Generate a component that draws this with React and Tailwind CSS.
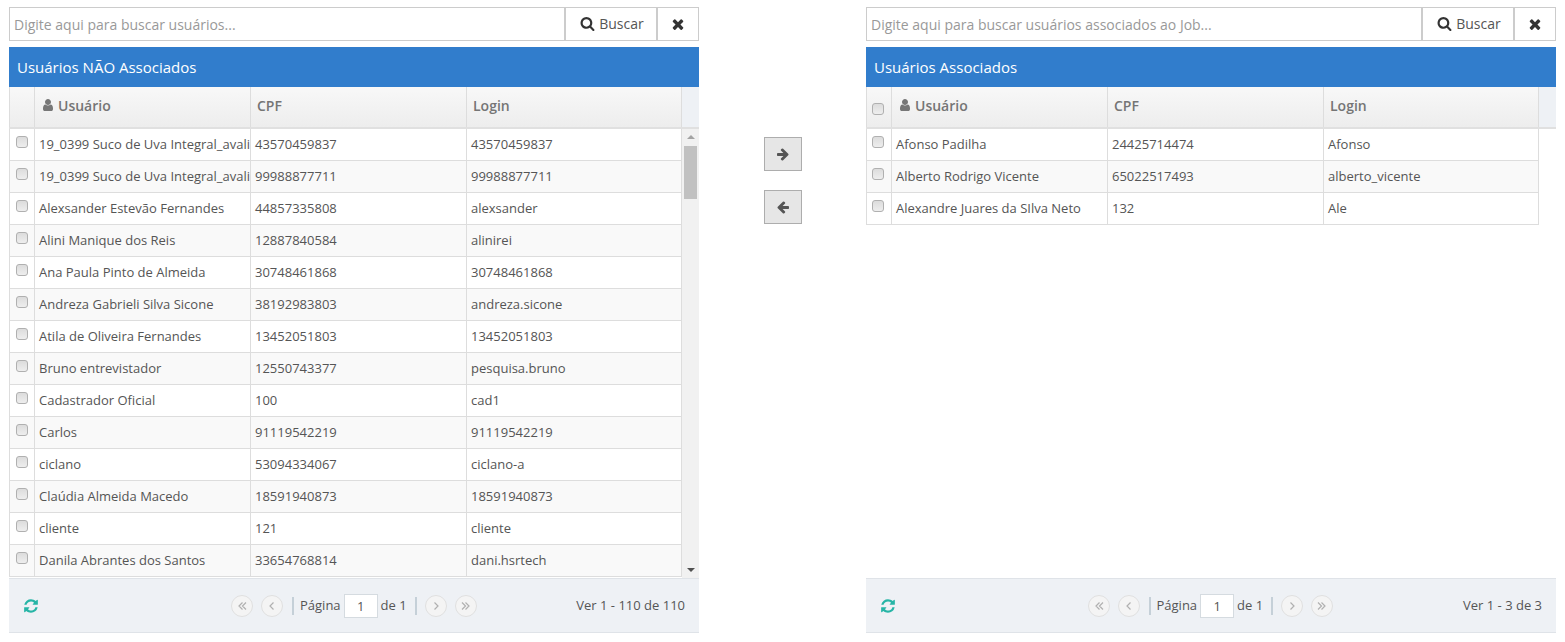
const left = [
  ['19_0399 Suco de Uva Integral_avali', '43570459837', '43570459837'],
  ['19_0399 Suco de Uva Integral_avali', '99988877711', '99988877711'],
  ['Alexsander Estevão Fernandes', '44857335808', 'alexsander'],
  ['Alini Manique dos Reis', '12887840584', 'alinirei'],
  ['Ana Paula Pinto de Almeida', '30748461868', '30748461868'],
  ['Andreza Gabrieli Silva Sicone', '38192983803', 'andreza.sicone'],
  ['Atila de Oliveira Fernandes', '13452051803', '13452051803'],
  ['Bruno entrevistador', '12550743377', 'pesquisa.bruno'],
  ['Cadastrador Oficial', '100', 'cad1'],
  ['Carlos', '91119542219', '91119542219'],
  ['ciclano', '53094334067', 'ciclano-a'],
  ['Claúdia Almeida Macedo', '18591940873', '18591940873'],
  ['cliente', '121', 'cliente'],
  ['Danila Abrantes dos Santos', '33654768814', 'dani.hsrtech'],
];

const right = [
  ['Afonso Padilha', '24425714474', 'Afonso'],
  ['Alberto Rodrigo Vicente', '65022517493', 'alberto_vicente'],
  ['Alexandre Juares da SIlva Neto', '132', 'Ale'],
];

const paths = {
  search: 'M1216 832q0-185-131.500-316.500t-316.500-131.500-316.500 131.500-131.500 316.500 131.500 316.500 316.500 131.500 316.500-131.500 131.500-316.500zm512 832q0 52-38 90t-90 38q-54 0-90-38l-343-342q-179 124-399 124-143 0-273.500-55.500t-225-150-150-225-55.500-273.500 55.500-273.500 150-225 225-150 273.500-55.500 273.500 55.500 225 150 150 225 55.500 273.500q0 220-124 399l343 343q37 37 37 90z',
  times: 'M1490 1322q0 40-28 68l-136 136q-28 28-68 28t-68-28l-294-294-294 294q-28 28-68 28t-68-28l-136-136q-28-28-28-68t28-68l294-294-294-294q-28-28-28-68t28-68l136-136q28-28 68-28t68 28l294 294 294-294q28-28 68-28t68 28l136 136q28 28 28 68t-28 68l-294 294 294 294q28 28 28 68z',
  right: 'M1600 960q0 54-37 91l-651 651q-39 37-91 37-51 0-90-37l-75-75q-38-38-38-91t38-91l293-293h-704q-52 0-84.500-37.500t-32.500-90.500v-128q0-53 32.500-90.500t84.500-37.500h704l-293-294q-38-36-38-90t38-90l75-75q38-38 90-38 53 0 91 38l651 651q37 35 37 90z',
  left: 'M1664 896v128q0 53-32.500 90.500t-84.500 37.500h-704l293 294q38 36 38 90t-38 90l-75 75q-38 38-90 38-53 0-91-38l-651-651q-37-37-37-91 0-53 37-91l651-650q38-38 91-38 52 0 90 38l75 74q38 38 38 91t-38 91l-293 293h704q52 0 84.500 37.500t32.500 90.500z',
  user: 'M1536 1399q0 109-62.500 187t-150.500 78h-854q-88 0-150.500-78t-62.500-187q0-85 8.500-160.500t31.500-152 58.500-131 94-89 134.500-34.500q131 128 313 128t313-128q76 0 134.500 34.500t94 89 58.500 131 31.500 152 8.500 160.500zm-256-887q0 159-112.500 271.500t-271.500 112.500-271.500-112.500-112.500-271.500 112.500-271.500 271.500-112.500 271.500 112.500 112.500 271.500z',
  refresh: 'M1639 1056q0 5-1 7-64 268-268 434.500t-478 166.500q-146 0-282.500-55t-243.500-157l-129 129q-19 19-45 19t-45-19-19-45v-448q0-26 19-45t45-19h448q26 0 45 19t19 45-19 45l-137 137q71 66 161 102t187 36q134 0 250-65t186-179q11-17 53-117 8-23 30-23h192q13 0 22.500 9.500t9.500 22.500zm25-800v448q0 26-19 45t-45 19h-448q-26 0-45-19t-19-45 19-45l138-138q-148-137-349-137-134 0-250 65t-186 179q-11 17-53 117-8 23-30 23h-199q-13 0-22.500-9.500t-9.500-22.500v-7q65-268 270-434.500t480-166.500q146 0 284 55.500t245 156.500l130-129q19-19 45-19t45 19 19 45z',
};

function Fa({ name, size, className }) {
  return (
    <svg viewBox="0 0 1792 1792" width={size} height={size} fill="currentColor" className={className}>
      <path d={paths[name]} />
    </svg>
  );
}

function Check() {
  return (
    <input
      type="checkbox"
      className="appearance-none block w-[12px] h-[12px] rounded-[3px] border border-[#b0b0b0] bg-gradient-to-b from-[#dcdcdc] to-[#eeeeee]"
    />
  );
}

function SearchBar({ placeholder }) {
  return (
    <div className="flex h-[34px] text-[14px]">
      <input
        placeholder={placeholder}
        className="flex-1 min-w-0 border border-[#ccc] border-r-0 px-[4px] text-[14px] text-[#555] placeholder:text-[#999] outline-none"
      />
      <button className="w-[92px] pl-[2px] pb-[2px] border border-[#ccc] border-r-0 border-l-2 flex items-center justify-center gap-[4px] text-[#555]">
        <Fa name="search" size={15} className="text-[#333] mt-[1px]" />
        Buscar
      </button>
      <button className="w-[43px] border border-[#ccc] border-l-2 flex items-center justify-center text-[#333]">
        <Fa name="times" size={16} />
      </button>
    </div>
  );
}

function Circle({ children }) {
  return (
    <span className="w-[22px] h-[22px] rounded-full border border-[#e0e0e0] bg-[#f4f4f4] flex items-center justify-center text-[#b0b0b0]">
      <svg viewBox="0 0 12 12" width="12" height="12" fill="none" stroke="currentColor" strokeWidth="1.2">
        <path d={children} />
      </svg>
    </span>
  );
}

function Pager({ leadClass, total }) {
  return (
    <div className="h-[55px] shrink-0 flex items-center bg-[#eef1f5] border-t border-[#dfe3e8] border-b text-[13px] text-[#555]">
      <div className={leadClass}>
        <Fa name="refresh" size={16} className="text-[#26b5a6]" />
      </div>
      <div className="flex items-center">
        <Circle>M6.5 2.500 3 6l3.500 3.500M10 2.500 6.500 6l3.500 3.500</Circle>
        <span className="ml-[8px]"><Circle>M7.500 2.500 4 6l3.500 3.500</Circle></span>
        <span className="ml-[9px] mr-[6px] w-[2px] h-[18px] bg-[#c5d0d8]" />
        <span>Página</span>
        <input
          readOnly
          value="1"
          className="mx-[3px] w-[34px] h-[24px] bg-white border border-[#d5dbe0] text-center text-[13px] text-[#555] outline-none"
        />
        <span>de 1</span>
        <span className="ml-[8px] mr-[8px] w-[2px] h-[18px] bg-[#c5d0d8]" />
        <Circle>M4.500 2.500 8 6l-3.500 3.500</Circle>
        <span className="ml-[8px]"><Circle>M2 2.500 5.500 6 2 9.500M5.500 2.500 9 6l-3.500 3.500</Circle></span>
      </div>
      <span className="ml-auto pr-[14px]">{total}</span>
    </div>
  );
}

function Table({ rows, headCheck, scroll, checkPad }) {
  return (
    <div className="flex-1 min-h-0 flex flex-col overflow-hidden">
      <div className="flex h-[42px] shrink-0">
        <div className="grid grid-cols-[26px_216px_216px_215px] border-b-2 border-[#e0e0e0] bg-gradient-to-b from-[#f8f8f8] to-[#ededed] text-[14px] font-semibold text-[#757575]">
          <div className={`border-l border-r border-[#ddd] pt-[16px] ${checkPad}`}>{headCheck && <Check />}</div>
          <div className="border-r border-[#ddd] pl-[6px] flex items-center gap-[3px] pb-[4px]">
            <Fa name="user" size={14} className="text-[#777]" />
            Usuário
          </div>
          <div className="border-r border-[#ddd] pl-[6px] flex items-center pb-[4px]">CPF</div>
          <div className="border-r border-[#ddd] pl-[6px] flex items-center pb-[4px]">Login</div>
        </div>
        <div className="flex-1 bg-[#eef1f5] border-b-2 border-[#e0e0e0]" />
      </div>
      <div className="flex flex-1 min-h-0">
        <div className="overflow-hidden">
          {rows.map((r, i) => (
            <div
              key={i}
              className={`grid grid-cols-[26px_216px_216px_215px] h-[32px] border-b border-[#ddd] text-[13px] text-[#555] ${i % 2 ? 'bg-[#f9f9f9]' : 'bg-white'}`}
            >
              <div className={`border-l border-r border-[#ddd] pt-[7px] ${checkPad}`}><Check /></div>
              <div className="border-r border-[#ddd] pl-[4px] flex items-center overflow-hidden whitespace-nowrap">{r[0]}</div>
              <div className="border-r border-[#ddd] pl-[4px] flex items-center">{r[1]}</div>
              <div className="border-r border-[#ddd] pl-[4px] flex items-center">{r[2]}</div>
            </div>
          ))}
        </div>
        {scroll && (
          <div className="flex-1 bg-[#f1f1f1] flex flex-col items-center">
            <span className="mt-[6px] w-0 h-0 border-x-[4px] border-x-transparent border-b-[4px] border-b-[#a3a3a3]" />
            <span className="mt-[7px] w-[13px] h-[53px] bg-[#c1c1c1]" />
            <span className="mt-auto mb-[6px] w-0 h-0 border-x-[4px] border-x-transparent border-t-[4px] border-t-[#505050]" />
          </div>
        )}
      </div>
    </div>
  );
}

function Panel({ placeholder, title, rows, headCheck, scroll, checkPad, leadClass, total }) {
  return (
    <div className="w-[690px] shrink-0 flex flex-col">
      <SearchBar placeholder={placeholder} />
      <div className="mt-[6px] h-[40px] shrink-0 bg-[#317dcc] text-white text-[15px] flex items-center pl-[8px]">{title}</div>
      <Table rows={rows} headCheck={headCheck} scroll={scroll} checkPad={checkPad} />
      <Pager leadClass={leadClass} total={total} />
    </div>
  );
}

export default function App() {
  return (
    <div className="h-[642px] overflow-hidden bg-white flex px-[9px] pt-[7px] pb-[9px] font-['Open_Sans',sans-serif]">
      <Panel
        placeholder="Digite aqui para buscar usuários..."
        title="Usuários NÃO Associados"
        rows={left}
        scroll
        checkPad="pl-[6px]"
        leadClass="w-[222px] pl-[14px]"
        total="Ver 1 - 110 de 110"
      />
      <div className="flex-1 flex flex-col items-center pt-[130px] gap-[19px]">
        <button className="w-[38px] h-[34px] bg-[#e6e6e6] border border-[#adadad] flex items-center justify-center text-[#555]">
          <Fa name="right" size={14} />
        </button>
        <button className="w-[38px] h-[34px] bg-[#e6e6e6] border border-[#adadad] flex items-center justify-center text-[#555]">
          <Fa name="left" size={14} />
        </button>
      </div>
      <Panel
        placeholder="Digite aqui para buscar usuários associados ao Job..."
        title="Usuários Associados"
        rows={right}
        headCheck
        checkPad="pl-[5px]"
        leadClass="w-[221.5px] pl-[14px]"
        total="Ver 1 - 3 de 3"
      />
    </div>
  );
}
